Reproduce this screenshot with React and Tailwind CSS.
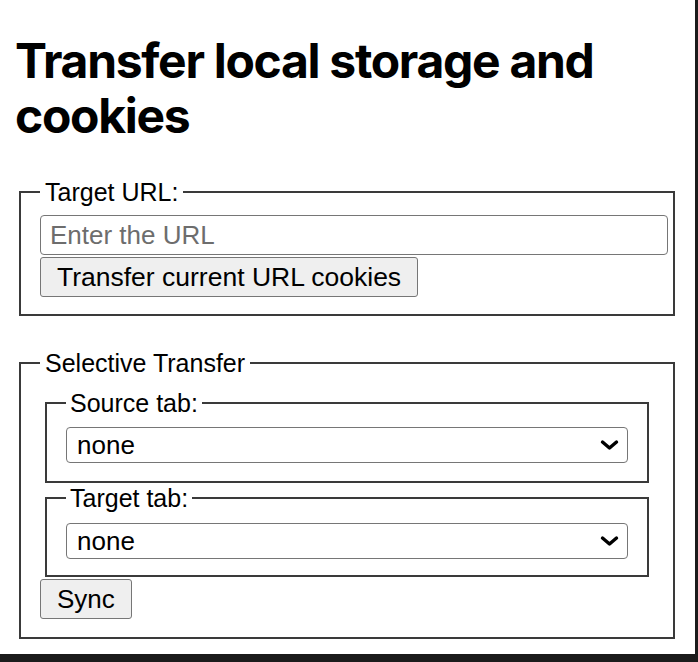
import React from "react";

function Chevron() {
  return (
    <svg
      className="pointer-events-none absolute right-[9px] top-1/2 -translate-y-1/2"
      width="19"
      height="11"
      viewBox="0 0 19 11"
      fill="none"
    >
      <path d="M2.5 2.5 L9.5 8.5 L16.5 2.5" stroke="#000" strokeWidth="3.4" strokeLinecap="round" strokeLinejoin="round" />
    </svg>
  );
}

function Select() {
  return (
    <div className="relative w-[562px] h-[36px]">
      <select
        defaultValue="none"
        className="appearance-none w-full h-full rounded-[4px] border border-[#767676] bg-white pl-[10px] pr-[34px] text-[26px] leading-[30px] text-black font-['Liberation_Sans',Arial,sans-serif] outline-none"
      >
        <option value="none">none</option>
      </select>
      <Chevron />
    </div>
  );
}

export default function App() {
  return (
    <div className="w-[698px] h-[662px] bg-[#1b1b1b] overflow-hidden">
      <div className="w-[695px] h-[654px] bg-white font-['Liberation_Sans',Arial,sans-serif] text-black">
        <h1 className="pl-[15px] pt-[33px] text-[48px] leading-[55px] font-bold tracking-[-1.3px] font-['Inter','Liberation_Sans',sans-serif]">
          Transfer local storage and
          <br />
          cookies
        </h1>

        <fieldset className="mt-[35px] ml-[19px] w-[656px] border-2 border-[#3a3a3a] pl-[19px] pr-[5px] pt-[9px] pb-[17px]">
          <legend className="px-[5px] text-[25px] leading-[28px]">Target URL:</legend>
          <input
            type="text"
            placeholder="Enter the URL"
            className="block w-[628px] h-[40px] rounded-[4px] border border-[#767676] bg-white px-[9px] text-[26px] leading-[30px] placeholder:text-[#6d6d6d] outline-none"
          />
          <button className="mt-[2px] block h-[40px] rounded-[3px] border border-[#767676] bg-[#efefef] px-[16px] text-[26.5px] leading-[30px] text-black">
            Transfer current URL cookies
          </button>
        </fieldset>

        <fieldset className="mt-[33px] ml-[19px] w-[656px] border-2 border-[#3a3a3a] pl-[19px] pr-[19px] pt-[12px] pb-[18px]">
          <legend className="px-[5px] text-[25px] leading-[28px]">Selective Transfer</legend>

          <fieldset className="mx-[5px] border-2 border-[#3a3a3a] px-[19px] pt-[10px] pb-[18px]">
            <legend className="px-[4px] text-[25px] leading-[28px]">Source tab:</legend>
            <Select />
          </fieldset>

          <fieldset className="mt-[1px] mx-[5px] border-2 border-[#3a3a3a] px-[19px] pt-[11px] pb-[16px]">
            <legend className="px-[4px] text-[25px] leading-[28px]">Target tab:</legend>
            <Select />
          </fieldset>

          <button className="mt-[2px] block h-[40px] rounded-[3px] border border-[#767676] bg-[#efefef] px-[16px] text-[26px] leading-[30px] text-black">
            Sync
          </button>
        </fieldset>
      </div>
    </div>
  );
}
